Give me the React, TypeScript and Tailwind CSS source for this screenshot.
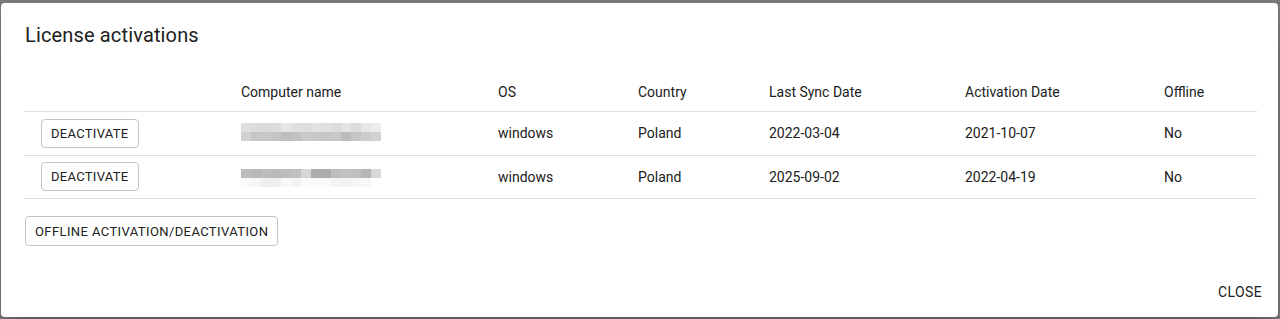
const rows = [
  {
    mosaic: [
      ['#dedede', '#dcdcdc', '#dadada', '#dcdcdc', '#e6e6e6', '#e0e0e0', '#dedede', '#e2e2e2', '#e0e0e0', '#dcdcdc', '#e4e4e4', '#dcdcdc', '#e8e8e8', '#ededed'],
      ['#d0d0d0', '#c6c6c6', '#c8c8c8', '#c4c4c4', '#bebebe', '#c2c2c2', '#cacaca', '#c8c8c8', '#c6c6c6', '#c8c8c8', '#bcbcbc', '#c6c6c6', '#cccccc', '#d2d2d2'],
    ],
    shift: '-mt-[2px]',
    lastSync: '2022-03-04',
    activation: '2021-10-07',
  },
  {
    mosaic: [
      ['#bcbcbc', '#b8b8b8', '#bebebe', '#bababa', '#bdbdbd', '#c0c0c0', '#d6d6d6', '#adadad', '#adadad', '#bdbdbd', '#c2c2c2', '#bebebe', '#b6b6b6', '#d8d8d8'],
      ['#fafafa', '#f6f6f6', '#eeeeee', '#efefef', '#f8f8f8', '#f3f3f3', '#fbfbfb', '#f9f9f9', '#fafafa', '#f5f5f5', '#f2f2f2', '#f6f6f6', '#f8f8f8', '#ffffff'],
    ],
    shift: 'mt-[2px]',
    lastSync: '2025-09-02',
    activation: '2022-04-19',
  },
];

const gridCols = 'grid grid-cols-[201px_257px_140px_131px_196px_199px_1fr]';

function Mosaic({ cells }: { cells: string[][] }) {
  return (
    <div className="flex flex-col">
      {cells.map((line, i) => (
        <div key={i} className="flex">
          {line.map((c, j) => (
            <div key={j} className="w-[10px] h-[9px]" style={{ backgroundColor: c }} />
          ))}
        </div>
      ))}
    </div>
  );
}

function OutlinedButton({ children }: { children: React.ReactNode }) {
  return (
    <button className="h-[29px] px-[9px] rounded-[4px] border border-[#c4c4c4] bg-white text-[13px] leading-none font-normal tracking-[0.3px] text-[#212121] uppercase">
      {children}
    </button>
  );
}

export default function App() {
  return (
    <div className="h-[319px] bg-[#7b7b7b] pl-[1px] pr-[2px] pt-[3px] pb-[2px] font-['Roboto',sans-serif] text-[#212121]">
      <div className="h-full bg-white rounded-[4px] shadow-[0_11px_15px_-7px_rgba(0,0,0,0.2),0_24px_38px_3px_rgba(0,0,0,0.14)] flex flex-col">
        {/* Title */}
        <h2 className="px-6 pt-4 pb-4 text-[20px] leading-[32px] font-normal tracking-[0.15px]">License activations</h2>

        {/* Content */}
        <div className="pl-[23px] pr-[21px] pb-5 flex-1">
          <div className="text-[14px] leading-6">
            <div className={`${gridCols} border-b border-[#e0e0e0] pt-[13px] pb-[7px]`}>
              <div />
              <div className="px-4">Computer name</div>
              <div className="px-4">OS</div>
              <div className="px-4">Country</div>
              <div className="px-4">Last Sync Date</div>
              <div className="px-4">Activation Date</div>
              <div className="px-4">Offline</div>
            </div>
            {rows.map((r, i) => (
              <div key={i} className={`${gridCols} h-[43.5px] items-center border-b border-[#e0e0e0]`}>
                <div className="pl-[17px]">
                  <OutlinedButton>Deactivate</OutlinedButton>
                </div>
                <div className={`px-4 ${r.shift}`}>
                  <Mosaic cells={r.mosaic} />
                </div>
                <div className="px-4">windows</div>
                <div className="px-4">Poland</div>
                <div className="px-4">{r.lastSync}</div>
                <div className="px-4">{r.activation}</div>
                <div className="px-4">No</div>
              </div>
            ))}
          </div>
          <div className="mt-[17px] pl-px">
            <button className="h-[30px] px-[9px] rounded-[4px] border border-[#c4c4c4] bg-white text-[13px] leading-none tracking-[0.4px] text-[#212121] uppercase">
              Offline activation/deactivation
            </button>
          </div>
        </div>

        {/* Actions */}
        <div className="flex justify-end p-2">
          <button className="h-9 px-2 text-[14px] font-normal tracking-[0.4px] uppercase text-[#212121]">Close</button>
        </div>
      </div>
    </div>
  );
}
